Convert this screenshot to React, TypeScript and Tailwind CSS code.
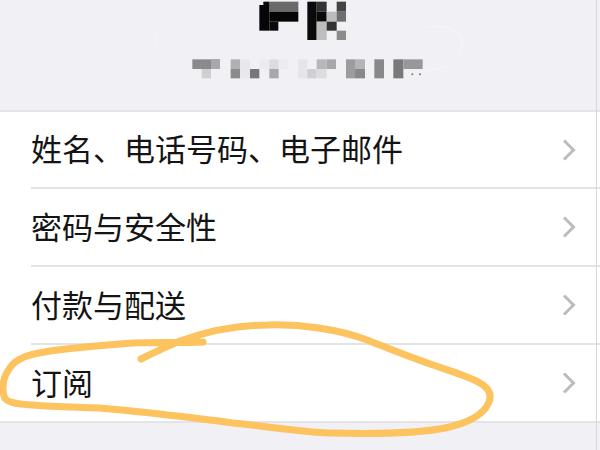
import React from "react"

const rows = [
  { label: "姓名、电话号码、电子邮件", height: "h-[77px]", line: true },
  { label: "密码与安全性", height: "h-[78px]", line: true },
  { label: "付款与配送", height: "h-[78px]", line: true },
  { label: "订阅", height: "h-[76px]", line: false },
]

// mosaic blocks: x, y, w, h, fill (drawn at 3x, shown at 1x)
const mosaic: [number, number, number, number, string][] = [
  [358, 5, 87, 30, "#6a6a6a"],
  [328, 15, 30, 77, "#060606"],
  [340, 5, 18, 12, "#0a0a0a"],
  [358, 35, 87, 30, "#050505"],
  [358, 65, 27, 27, "#0a0a0a"],
  [472, 5, 28, 115, "#0a0a0a"],
  [500, 5, 30, 30, "#333333"],
  [500, 35, 30, 30, "#0a0a0a"],
  [530, 35, 30, 30, "#bcbcbc"],
  [560, 5, 28, 30, "#444444"],
  [560, 35, 28, 30, "#6e6e6e"],
  [500, 65, 30, 55, "#bdbdbd"],
  [530, 65, 30, 27, "#333333"],
  [560, 92, 28, 28, "#8c8c8c"],
  [127, 178, 83, 29, "#8a8a8c"],
  [183, 178, 27, 29, "#a8a8aa"],
  [155, 207, 28, 28, "#cfcfd1"],
  [242, 178, 28, 29, "#b0b0b2"],
  [242, 207, 28, 28, "#8a8a8c"],
  [270, 178, 30, 57, "#e8e8ec"],
  [300, 207, 28, 28, "#77777a"],
  [328, 178, 30, 29, "#ececf0"],
  [358, 178, 28, 29, "#dcdce0"],
  [358, 207, 28, 28, "#a8a8aa"],
  [386, 178, 29, 29, "#ececf0"],
  [444, 178, 28, 57, "#e6e6ea"],
  [472, 207, 28, 28, "#d0d0d4"],
  [500, 178, 30, 29, "#b8b8bb"],
  [500, 207, 30, 28, "#dddde0"],
  [530, 178, 28, 29, "#a8a8aa"],
  [588, 178, 27, 57, "#9c9c9e"],
  [615, 178, 30, 29, "#b4b4b6"],
  [615, 207, 30, 28, "#88888a"],
  [673, 178, 29, 57, "#88888a"],
  [730, 178, 30, 57, "#79797b"],
  [760, 178, 58, 29, "#98989a"],
]

function Chevron() {
  return (
    <svg width="14" height="22" viewBox="0 0 14 22" fill="none" className="shrink-0">
      <path d="M2 1.5 L11.5 11 L2 20.5" stroke="#bcbcc0" strokeWidth="3" />
    </svg>
  )
}

export default function App() {
  return (
    <div className="relative h-[450px] w-[600px] overflow-hidden bg-[#f1f0f5] font-['Noto_Sans_CJK_SC',sans-serif]">
      {/* Blurred account header */}
      <header className="h-[110px] pl-[150px]">
        <svg width="330" height="110" viewBox="0 0 990 330">
          <path d="M20 130 C 10 100 25 85 50 75" stroke="#f7f7fa" strokeWidth="3" fill="none" />
          <path d="M830 80 C 930 75 945 110 930 160 C 915 200 860 210 800 215" stroke="#f7f7fa" strokeWidth="3" fill="none" />
          {mosaic.map(([x, y, w, h, fill], i) => (
            <rect key={i} x={x} y={y} width={w} height={h} fill={fill} />
          ))}
          <circle cx="787" cy="223" r="3" fill="#77777a" />
          <circle cx="810" cy="223" r="3" fill="#77777a" />
        </svg>
      </header>

      {/* Settings rows */}
      <div className="border-y-2 border-[#e4e4e6] bg-white">
        {rows.map((row) => (
          <div key={row.label} className="pl-[31px]">
            <div
              className={`flex items-center justify-between pr-[24px] text-[31px] leading-none text-[#141414] ${row.height} ${
                row.line ? "border-b-2 border-[#e4e4e6]" : ""
              }`}
            >
              <span className="mb-[4px]">{row.label}</span>
              <Chevron />
            </div>
          </div>
        ))}
      </div>

      {/* Hand drawn highlight */}
      <svg className="absolute inset-0" width="600" height="450" viewBox="0 0 600 450" fill="none">
        <path
          d="M141 359 C 155 352 168 346 180 341 C 208 331 238 325 268 325 C 300 324 338 329 367 340 C 390 349 412 358 433 365 C 450 371 468 376 480 383 C 489 388 492 394 489 402 C 484 415 468 423 445 428 C 420 433 370 434 330 433 C 300 432 265 426 233 423 C 210 420 188 417 167 415 C 145 412 122 410 100 408 C 78 407 55 407 33 405 C 15 404 5 402 4 396 C 2 388 2 376 13 364 C 22 355 38 353 50 351 C 78 347 105 345 133 343 C 155 342 180 343 203 342"
          stroke="#fcc35f"
          strokeWidth="7"
          strokeLinecap="round"
          strokeLinejoin="round"
        />
      </svg>

      <div className="absolute bottom-0 right-[3px] top-0 w-px bg-[#d8d8da]" />
    </div>
  )
}
